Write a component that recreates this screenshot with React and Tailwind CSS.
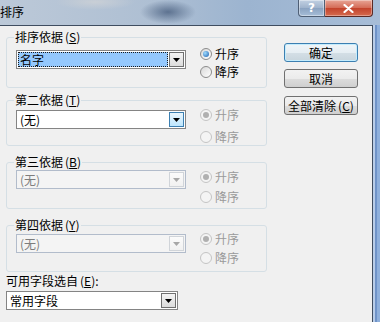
import React from "react";

function Arrow({ disabled }) {
  return (
    <svg width="7" height="4" viewBox="0 0 7 4">
      <polygon points="0,0 7,0 3.5,4" fill={disabled ? "#a7a7a7" : "#000"} />
    </svg>
  );
}

function Combo({ value, variant, wide }) {
  const outer =
    variant === "disabled"
      ? "border-[#b2bccb] bg-[#f4f4f4] text-[#7d7d7d]"
      : "border-[#848484] bg-white text-black";
  const btn =
    variant === "disabled"
      ? "border-[#d0d4d9] bg-[linear-gradient(#fbfbfb,#f1f1f1)]"
      : variant === "hover"
      ? "border-[#3c7fb1] bg-[linear-gradient(#eaf6fd,#bee6fd)]"
      : "border-[#707070] bg-[linear-gradient(#f4f4f4,#dcdcdc)]";
  return (
    <div
      className={`${wide ? "w-[172px]" : "w-[170px]"} h-[19px] border ${outer} flex items-stretch p-[1px] shrink-0`}
    >
      {variant === "selected" ? (
        <div className="flex-1 bg-[#94c8fd] border border-dotted border-[#1a1a1a] flex items-center pl-[1px] leading-[12px]">
          {value}
        </div>
      ) : (
        <div className="flex-1 flex items-center pl-[2px] leading-[12px]">{value}</div>
      )}
      <div className={`w-[15px] ml-[1px] border ${btn} flex items-center justify-center`}>
        <Arrow disabled={variant === "disabled"} />
      </div>
    </div>
  );
}

function Radio({ checked, disabled, label, className }) {
  return (
    <div className={`flex items-center h-[14px] ${className}`}>
      <span
        className={`w-[12px] h-[12px] rounded-full border flex items-center justify-center ${
          disabled
            ? "border-[#c4c4c4] bg-[#f4f4f4]"
            : "border-[#8b8b8b] bg-[linear-gradient(135deg,#d8d8d8,#ffffff)]"
        }`}
      >
        {checked && (
          <span
            className={`w-[6px] h-[6px] rounded-full ${
              disabled
                ? "bg-[#b0b0b0]"
                : "bg-[radial-gradient(circle_at_35%_35%,#9fdcff,#1d5fae)]"
            }`}
          />
        )}
      </span>
      <span className={`ml-[3px] leading-[12px] ${disabled ? "text-[#9a9a9a]" : "text-black"}`}>
        {label}
      </span>
    </div>
  );
}

function Group({ title, acc, className, comboClass, radioClass, gapClass, combo, radiosDisabled }) {
  return (
    <fieldset className={`w-[261px] border border-[#d5dfe5] rounded-[3px] shrink-0 ${className}`}>
      <legend className="ml-[7px] px-[1px] leading-[14px]">
        {title}
        <span className="ml-[2px]">
          (<span className="underline">{acc}</span>)
        </span>
      </legend>
      <div className="flex items-start pl-[9px]">
        <div className={comboClass}>{combo}</div>
        <div className={`ml-[14px] flex flex-col ${radioClass}`}>
          <Radio checked disabled={radiosDisabled} label="升序" />
          <Radio disabled={radiosDisabled} label="降序" className={gapClass} />
        </div>
      </div>
    </fieldset>
  );
}

function Button({ children, def }) {
  return (
    <button
      className={`w-[74px] h-[19px] rounded-[3px] border text-[12px] leading-[12px] text-black flex items-center justify-center whitespace-nowrap ${
        def
          ? "border-[#3c7fb1] shadow-[inset_0_0_0_1px_#c4ecfd] bg-[linear-gradient(#f0f5f8_0%,#e6eef3_50%,#d4dfe6_50%,#c8d5dd_100%)]"
          : "border-[#707070] bg-[linear-gradient(#f2f2f2_0%,#ebebeb_50%,#dddddd_50%,#cfcfcf_100%)]"
      }`}
    >
      {children}
    </button>
  );
}

export default function App() {
  return (
    <div className="w-[380px] h-[322px] overflow-hidden flex flex-col font-['Noto_Sans_CJK_SC','Noto_Sans_CJK_JP',sans-serif] text-[12px] leading-[12px] text-black bg-[radial-gradient(ellipse_28px_12px_at_168px_12px,#5d7290,transparent),radial-gradient(ellipse_40px_8px_at_95px_2px,#c9cfd6,transparent),linear-gradient(to_right,#bcc9d8,#aebfd3_40%,#9cb4d0_65%,#a7bdd7)]">
      <div className="h-[25px] flex items-start shrink-0">
        <div className="ml-0 mt-[6px] text-[12px] leading-[12px] text-black">排序</div>
        <div className="flex-1" />
        <div className="flex mr-[7px]">
          <div className="w-[27px] h-[17px] rounded-bl-[4px] border border-[#4f5f75] border-t-0 bg-[linear-gradient(#c2d1e3,#9fb3cc_50%,#8aa2c0_50%,#a6bdd8)] flex items-center justify-center text-white font-['DejaVu_Sans',sans-serif] font-bold text-[12px] leading-[12px] shadow-[inset_0_0_0_1px_rgba(255,255,255,0.4)]">
            ?
          </div>
          <div className="w-[48px] h-[17px] rounded-br-[4px] border border-[#5a2a25] border-t-0 border-l-0 bg-[linear-gradient(#e8a596,#d46a55_50%,#c2412a_50%,#d56b4f)] flex items-center justify-center shadow-[inset_0_0_0_1px_rgba(255,255,255,0.35)]">
            <svg width="11" height="9" viewBox="0 0 11 9">
              <path d="M1.5 1 L9.5 8 M9.5 1 L1.5 8" stroke="#fff" strokeWidth="2.2" strokeLinecap="round" />
            </svg>
          </div>
        </div>
      </div>
      <div className="flex-1 flex">
        <div className="flex-1 bg-[#f0f0f0] border-t border-r border-[#3f4d60] flex pl-[6px] pt-[4px]">
          <div className="w-[261px] flex flex-col">
            <Group
              title="排序依据"
              acc="S"
              className="h-[58px]"
              comboClass="mt-[6px]"
              radioClass="mt-[3px]"
              gapClass="mt-[4px]"
              combo={<Combo value="名字" variant="selected" />}
            />
            <Group
              title="第二依据"
              acc="T"
              className="h-[53px] mt-[5px]"
              comboClass="mt-[3px]"
              radioClass="mt-[1px]"
              gapClass="mt-[8px]"
              radiosDisabled
              combo={<Combo value="(无)" variant="hover" />}
            />
            <Group
              title="第三依据"
              acc="B"
              className="h-[54px] mt-[9px]"
              comboClass="mt-[1px]"
              radioClass="mt-[1px]"
              gapClass="mt-[6px]"
              radiosDisabled
              combo={<Combo value="(无)" variant="disabled" />}
            />
            <Group
              title="第四依据"
              acc="Y"
              className="h-[54px] mt-[9px]"
              comboClass="mt-[2px]"
              radioClass="mt-0"
              gapClass="mt-[5px]"
              radiosDisabled
              combo={<Combo value="(无)" variant="disabled" />}
            />
            <div className="mt-[3px] leading-[12px]">
              可用字段选自<span className="ml-[2px]">(<span className="underline">E</span>):</span>
            </div>
            <div className="mt-[4px]">
              <Combo value="常用字段" variant="normal" wide />
            </div>
          </div>
          <div className="ml-[17px] mt-[13px] flex flex-col">
            <Button def>确定</Button>
            <div className="mt-[7px]">
              <Button>取消</Button>
            </div>
            <div className="mt-[8px]">
              <Button>
                全部清除<span className="ml-[2px]">(<span className="underline">C</span>)</span>
              </Button>
            </div>
          </div>
        </div>
        <div className="w-[7px] bg-[linear-gradient(to_right,#b9cde8_0,#b9cde8_2px,#6f93c8_2px,#6f93c8_4px,#8fb0dc_4px)]" />
      </div>
    </div>
  );
}
